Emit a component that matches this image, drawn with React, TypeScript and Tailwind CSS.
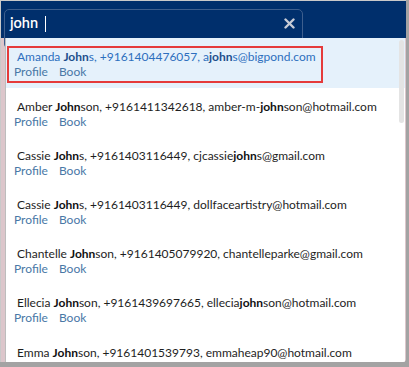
import React from "react";

type Row = { name: string; phone: string; email: string };

const rows: Row[] = [
  { name: "Amanda Johns", phone: "+9161404476057", email: "ajohns@bigpond.com" },
  { name: "Amber Johnson", phone: "+9161411342618", email: "amber-m-johnson@hotmail.com" },
  { name: "Cassie Johns", phone: "+9161403116449", email: "cjcassiejohns@gmail.com" },
  { name: "Cassie Johns", phone: "+9161403116449", email: "dollfaceartistry@hotmail.com" },
  { name: "Chantelle Johnson", phone: "+9161405079920", email: "chantelleparke@gmail.com" },
  { name: "Ellecia Johnson", phone: "+9161439697665", email: "elleciajohnson@hotmail.com" },
  { name: "Emma Johnson", phone: "+9161401539793", email: "emmaheap90@hotmail.com" },
];

const heights = ["h-[50px]", "h-[49px]", "h-[49px]", "h-[49px]", "h-[49px]", "h-[50px]", "h-[50px]"];

function Hl({ text, active }: { text: string; active: boolean }) {
  const idx = text.toLowerCase().indexOf("john");
  if (idx < 0) return <>{text}</>;
  return (
    <>
      {text.slice(0, idx)}
      <b className={active ? "font-bold text-[#1d4f8c]" : "font-bold text-[#111]"}>{text.slice(idx, idx + 4)}</b>
      {text.slice(idx + 4)}
    </>
  );
}

export default function App() {
  return (
    <div
      className="w-[409px] h-[367px] overflow-hidden bg-[#a3a3a3]"
      style={{ fontFamily: "Lato, 'Open Sans', sans-serif" }}
    >
      <div className="w-[406px] h-[362px] flex flex-col bg-[#dcc6cb] border-l border-t border-[#c9c9c9] rounded-br-[3px] overflow-hidden">
        {/* header */}
        <div className="h-[37px] shrink-0 bg-[#002f6c] pl-[3px] pt-[8px]">
          <div className="w-[299px] h-[40px] rounded-[5px] border border-[#3e5f8e] flex items-center pl-[5px] pb-[11px] relative">
            <span className="text-white text-[14.5px] font-semibold leading-none">john</span>
            <span className="ml-[7px] w-px h-[16px] bg-white"></span>
            <svg
              className="absolute right-[7px] top-[8px]"
              width="11"
              height="11"
              viewBox="0 0 11 11"
            >
              <path d="M1.5 1.5 L9.5 9.5 M9.5 1.5 L1.5 9.5" stroke="#c7ccd6" strokeWidth="2.4" strokeLinecap="round" />
            </svg>
          </div>
        </div>
        {/* dropdown */}
        <div className="flex-1 flex pl-[4px]">
          <div className="relative w-[400px] bg-white border-l border-[#bdbdbd] rounded-bl-[4px] overflow-hidden">
            {rows.map((r, i) => {
              const active = i === 0;
              return (
                <div
                  key={i}
                  className={heights[i] + (active ? " bg-[#e5f1fb]" : "") + " pt-[8px] pl-[1px] pr-[10px]"}
                >
                  <div
                    className={
                      "w-[316px] h-[37px] border-2 pt-[1px] whitespace-nowrap " +
                      (active ? "border-[#e53b3b]" : "border-transparent")
                    }
                  >
                    <div
                      className={
                        "pl-[8px] text-[12px] leading-[16px] " +
                        (active ? "text-[#2d6fbe]" : "text-[#1e1e1e]")
                      }
                    >
                      <Hl text={r.name} active={active} />, {r.phone}, <Hl text={r.email} active={active} />
                    </div>
                    <div className="pl-[5px] text-[12px] leading-[14px] text-[#4978a6] flex gap-[11px]">
                      <span>Profile</span>
                      <span>Book</span>
                    </div>
                  </div>
                </div>
              );
            })}
            <div className="absolute right-[1px] top-[2px] w-[5px] h-[83px] rounded-[3px] bg-[#e4e4e4]"></div>
          </div>
        </div>
      </div>
    </div>
  );
}
